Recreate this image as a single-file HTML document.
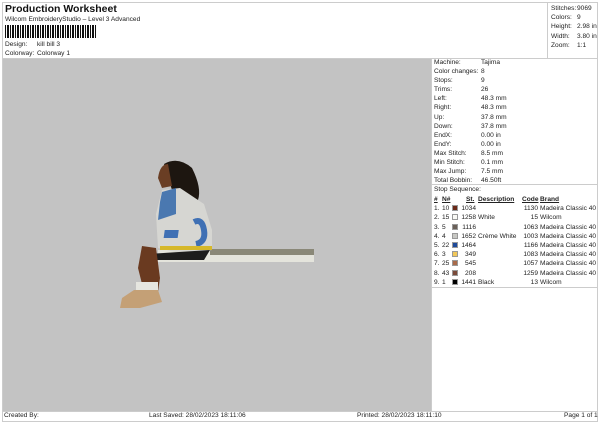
<!DOCTYPE html>
<html><head><style>
*{margin:0;padding:0;box-sizing:border-box}
body{width:600px;height:424px;background:#fff;font-family:"Liberation Sans",sans-serif;font-size:6.6px;color:#222;position:relative;overflow:hidden}
.a{position:absolute;white-space:nowrap}
.ln{position:absolute;background:#ccc}
.sw{display:inline-block;width:6px;height:6px;border:1px solid #999;vertical-align:-1px}
</style></head><body>
<div class="ln" style="left:2px;top:2px;width:596px;height:1px"></div>
<div class="ln" style="left:2px;top:2px;width:1px;height:420px"></div>
<div class="ln" style="left:597px;top:2px;width:1px;height:420px"></div>
<div class="ln" style="left:2px;top:421px;width:596px;height:1px"></div>
<div class="ln" style="left:547px;top:2px;width:1px;height:56px"></div>
<div class="a" style="left:5px;top:3px;font-size:10.5px;font-weight:bold;color:#111">Production Worksheet</div>
<div class="a" style="left:5px;top:16px">Wilcom EmbroideryStudio – Level 3 Advanced</div>
<div class="a" style="left:5px;top:25px;width:92px;height:13px;background:repeating-linear-gradient(90deg,#111 0 1px,#fff 1px 2px,#111 2px 3px,#111 3px 4px,#fff 4px 5px)"></div>
<div class="a" style="left:5px;top:41px">Design:</div><div class="a" style="left:37px;top:41px">kill bill 3</div>
<div class="a" style="left:5px;top:50px">Colorway:</div><div class="a" style="left:37px;top:50px">Colorway 1</div>
<div class="a" style="left:551px;top:4px;line-height:9.2px">Stitches:<br>Colors:<br>Height:<br>Width:<br>Zoom:</div>
<div class="a" style="left:577px;top:4px;line-height:9.2px">9069<br>9<br>2.98 in<br>3.80 in<br>1:1</div>
<div class="a" style="left:3px;top:59px;width:428px;height:352px;background:#c3c3c3"></div>
<div class="ln" style="left:2px;top:58px;width:596px;height:1px"></div>
<div class="ln" style="left:431px;top:58px;width:1px;height:353px"></div>
<div class="ln" style="left:2px;top:411px;width:596px;height:1px"></div>
<div class="ln" style="left:432px;top:184px;width:165px;height:1px"></div>
<div class="ln" style="left:432px;top:287px;width:165px;height:1px"></div>
<svg class="a" style="left:100px;top:150px" width="220" height="170" viewBox="0 0 220 170">
<rect x="58" y="100" width="156" height="12" fill="#e4e4dc"/>
<rect x="110" y="99" width="104" height="6" fill="#8a8878"/>
<path d="M64 14 Q78 6 92 18 Q102 38 98 50 L84 52 L72 40 Z" fill="#1d1610"/>
<path d="M58 28 Q60 14 68 14 L72 36 L62 38 Z" fill="#6a3e24"/>
<path d="M62 40 L80 38 L104 54 L112 80 L112 100 L84 104 L58 98 L56 64 Z" fill="#d6d6d2"/>
<path d="M62 42 L76 38 L76 64 L58 70 L60 52 Z" fill="#4a78b0"/>
<path d="M76 56 L86 50 L90 60 L78 64 Z" fill="#d6d6d2"/>
<path d="M94 72 Q102 68 104 80 Q106 92 96 94" stroke="#3f70b4" stroke-width="6" fill="none"/>
<rect x="76" y="80" width="14" height="8" fill="#3f70b4" transform="skewX(-8)"/>
<rect x="60" y="96" width="52" height="4" fill="#d6b82a"/>
<path d="M48 104 L110 100 L104 110 L50 110 Z" fill="#1c1c1c"/>
<path d="M42 96 L56 98 L60 128 L58 142 L44 142 L38 118 Z" fill="#6a3a20"/>
<rect x="36" y="132" width="22" height="8" fill="#e6e6e0"/>
<path d="M22 148 L34 140 L58 140 L62 152 L40 158 L20 158 Z" fill="#c4a076"/>
</svg>
<div class="a" style="left:434px;top:58px;line-height:9.1px">Machine:<br>Color changes:<br>Stops:<br>Trims:<br>Left:<br>Right:<br>Up:<br>Down:<br>EndX:<br>EndY:<br>Max Stitch:<br>Min Stitch:<br>Max Jump:<br>Total Bobbin:<br>Stop Sequence:</div>
<div class="a" style="left:481px;top:58px;line-height:9.1px">Tajima<br>8<br>9<br>26<br>48.3 mm<br>48.3 mm<br>37.8 mm<br>37.8 mm<br>0.00 in<br>0.00 in<br>8.5 mm<br>0.1 mm<br>7.5 mm<br>46.50ft</div>
<div style="position:absolute;left:434px;top:195px;line-height:9.2px">
<div class="a" style="left:0;font-weight:bold;text-decoration:underline">#</div>
<div class="a" style="left:8px;font-weight:bold;text-decoration:underline">N#</div>
<div class="a" style="left:32px;font-weight:bold;text-decoration:underline">St.</div>
<div class="a" style="left:44px;font-weight:bold;text-decoration:underline">Description</div>
<div class="a" style="left:88px;font-weight:bold;text-decoration:underline">Code</div>
<div class="a" style="left:106px;font-weight:bold;text-decoration:underline">Brand</div>
<div class="a" style="left:0;top:9.2px">1.<br>2.<br>3.<br>4.<br>5.<br>6.<br>7.<br>8.<br>9.</div>
<div class="a" style="left:8px;top:9.2px">10<br>15<br>5<br>4<br>22<br>3<br>25<br>43<br>1</div>
<div class="a" style="left:18px;top:9.2px"><span class="sw" style="background:#6a2a18"></span><br><span class="sw" style="background:#fafaf6"></span><br><span class="sw" style="background:#6a6058"></span><br><span class="sw" style="background:#c8c8c4"></span><br><span class="sw" style="background:#1e4a9a"></span><br><span class="sw" style="background:#f2c85a"></span><br><span class="sw" style="background:#a86a4a"></span><br><span class="sw" style="background:#7a4a3a"></span><br><span class="sw" style="background:#000"></span></div>
<div class="a" style="left:26px;top:9.2px;width:16px;text-align:right">1034<br>1258<br>1116<br>1652<br>1464<br>349<br>545<br>208<br>1441</div>
<div class="a" style="left:44px;top:9.2px"><br>White<br><br>Crème White<br><br><br><br><br>Black</div>
<div class="a" style="left:84px;top:9.2px;width:20px;text-align:right">1130<br>15<br>1063<br>1003<br>1166<br>1083<br>1057<br>1259<br>13</div>
<div class="a" style="left:106px;top:9.2px">Madeira Classic 40<br>Wilcom<br>Madeira Classic 40<br>Madeira Classic 40<br>Madeira Classic 40<br>Madeira Classic 40<br>Madeira Classic 40<br>Madeira Classic 40<br>Wilcom</div>
</div>
<div class="a" style="left:4px;top:412px">Created By:</div>
<div class="a" style="left:149px;top:412px">Last Saved: 28/02/2023 18:11:06</div>
<div class="a" style="left:357px;top:412px">Printed: 28/02/2023 18:11:10</div>
<div class="a" style="left:564px;top:412px">Page 1 of 1</div>
</body></html>
